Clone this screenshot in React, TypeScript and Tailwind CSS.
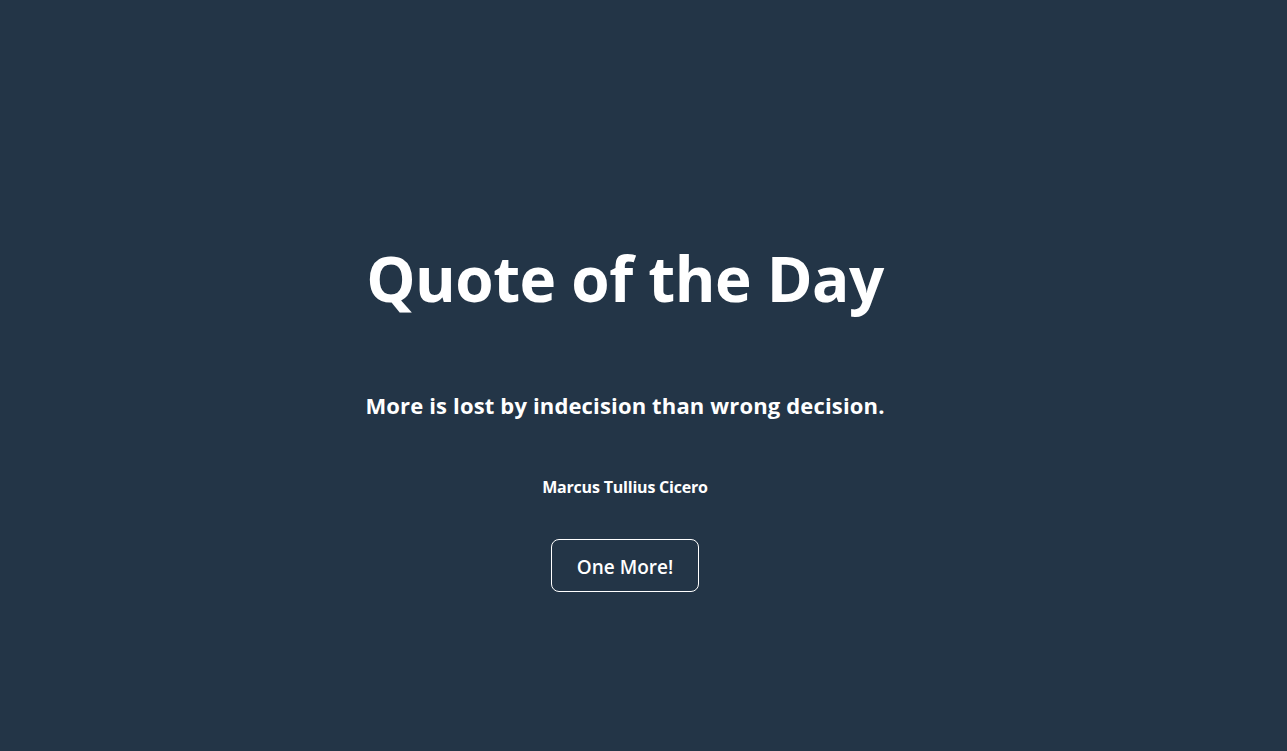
export default function App() {
  return (
    <div className="min-h-screen w-full bg-[#233547] text-white" style={{ fontFamily: '"Open Sans", "Noto Sans", sans-serif' }}>
      <div className="flex w-[1250px] flex-col items-center pt-[236px]">
        <h1 className="text-[62px] font-bold leading-[84px] tracking-[-0.5px]">Quote of the Day</h1>
        <p className="mt-[70px] text-[22px] font-bold leading-[30px] tracking-[0.15px]">
          More is lost by indecision than wrong decision.
        </p>
        <p className="mt-[56px] text-[16px] font-bold leading-[22px] tracking-[-0.2px]">Marcus Tullius Cicero</p>
        <button className="mt-[41px] h-[53px] w-[148px] rounded-lg border border-white pt-[3px] text-[19px] font-semibold">
          One More!
        </button>
      </div>
    </div>
  )
}
